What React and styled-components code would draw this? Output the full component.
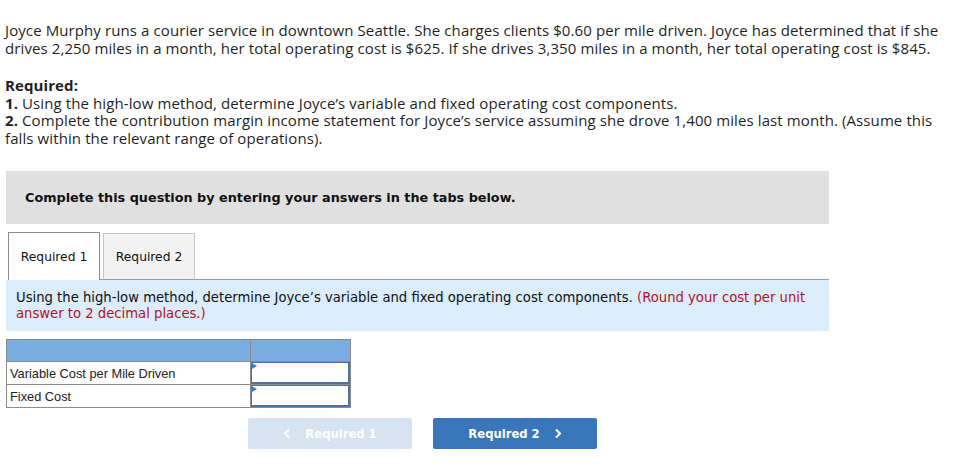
import React from "react";
import styled, { createGlobalStyle } from "styled-components";

const GlobalStyle = createGlobalStyle`
  body {
    margin: 0;
    background: #fff;
    color: #1f1f1f;
    font-family: "Open Sans", "Liberation Sans", sans-serif;
  }
`;

const Page = styled.div`
  width: 959px;
  padding: 22px 0 0 5px;
  box-sizing: border-box;
`;

const Para = styled.p`
  margin: 0 0 20px;
  width: 940px;
  font-size: 15px;
  line-height: 17.5px;
  letter-spacing: 0.1px;
`;

const Bold = styled.b`
  font-weight: 700;
`;

const Panel = styled.div`
  width: 823px;
  margin-left: 1px;
  margin-top: 24px;
`;

const Banner = styled.div`
  height: 53px;
  background: #e0e0e0;
  display: flex;
  align-items: center;
  padding-left: 19px;
  font-family: "DejaVu Sans", Verdana, sans-serif;
  font-weight: 700;
  font-size: 12.8px;
  color: #111;
`;

const TabRow = styled.div`
  display: flex;
  margin-top: 8px;
  padding-left: 2px;
  height: 48px;
  align-items: flex-end;
`;

const Tab = styled.div`
  width: 92px;
  height: ${(p) => (p.$active ? "48px" : "47px")};
  box-sizing: border-box;
  border: 1px solid ${(p) => (p.$active ? "#8a8a8a" : "#c4c4c4")};
  border-bottom: ${(p) => (p.$active ? "none" : "1px solid #9a9a9a")};
  background: ${(p) => (p.$active ? "#fff" : "#f2f2f2")};
  display: flex;
  align-items: center;
  justify-content: center;
  font-family: "DejaVu Sans", Verdana, sans-serif;
  font-size: 12.3px;
  color: #111;
`;

const TabGap = styled.div`
  width: 3px;
  align-self: stretch;
  border-bottom: 1px solid #9a9a9a;
`;

const TabFill = styled.div`
  flex: 1;
  align-self: stretch;
  border-bottom: 1px solid #9a9a9a;
`;

const Instructions = styled.div`
  background: #dbecfa;
  padding: 10px 10px 9px 10px;
  height: 51px;
  box-sizing: border-box;
  font-family: "DejaVu Sans", Verdana, sans-serif;
  font-size: 13.2px;
  line-height: 16px;
  color: #111;
`;

const Note = styled.span`
  color: #b4121e;
`;

const Table = styled.table`
  border-collapse: collapse;
  margin-top: 8px;
  font-family: "Liberation Sans", Arial, sans-serif;
  font-size: 12.8px;
  color: #222;
`;

const HeadCell = styled.td`
  background: #7aaee3;
  border: 1px solid #8c8c8c;
  height: 21px;
  padding: 0;
`;

const LabelCell = styled.td`
  width: 240px;
  height: 22px;
  border: 1px solid #8c8c8c;
  padding: 0 0 0 3px;
`;

const InputCell = styled.td`
  width: 99px;
  border: 1px solid #8c8c8c;
  padding: 0;
  position: relative;
`;

const Input = styled.div`
  height: 22px;
  box-sizing: border-box;
  border: 2px solid #4a72a4;
  border-top-width: 1px;
  border-left-width: 1px;
  background: #fff;
`;

const Marker = styled.span`
  position: absolute;
  left: 1px;
  top: 1px;
  width: 0;
  height: 0;
  border-top: 3px solid transparent;
  border-bottom: 3px solid transparent;
  border-left: 5px solid #3d7fd0;
`;

const NavRow = styled.div`
  display: flex;
  gap: 21px;
  margin-top: 10px;
  margin-left: 242px;
`;

const NavButton = styled.div`
  width: 164px;
  height: 31px;
  border-radius: 2px;
  background: ${(p) => (p.$disabled ? "#d7e3f1" : "#3a76ba")};
  color: #fff;
  display: flex;
  align-items: center;
  justify-content: center;
  gap: 14px;
  font-family: "DejaVu Sans", Verdana, sans-serif;
  font-weight: 700;
  font-size: 11.6px;
`;

const Chevron = ({ dir }) => (
  <svg width="8" height="11" viewBox="0 0 8 11">
    <path
      d={dir === "left" ? "M6 1.5 L2 5.5 L6 9.5" : "M2 1.5 L6 5.5 L2 9.5"}
      fill="none"
      stroke="#fff"
      strokeWidth="2"
    />
  </svg>
);

const rows = ["Variable Cost per Mile Driven", "Fixed Cost"];

export default function App() {
  return (
    <>
      <GlobalStyle />
      <Page>
        <Para>
          Joyce Murphy runs a courier service in downtown Seattle. She charges clients $0.60 per mile
          driven. Joyce has determined that if she drives 2,250 miles in a month, her total operating
          cost is $625. If she drives 3,350 miles in a month, her total operating cost is $845.
        </Para>
        <Para>
          <Bold>Required:</Bold>
          <br />
          <Bold>1.</Bold> Using the high-low method, determine Joyce’s variable and fixed operating cost
          components.
          <br />
          <Bold>2.</Bold> Complete the contribution margin income statement for Joyce’s service assuming
          she drove 1,400 miles last month. (Assume this falls within the relevant range of operations).
        </Para>
        <Panel>
          <Banner>Complete this question by entering your answers in the tabs below.</Banner>
          <TabRow>
            <Tab $active>Required 1</Tab>
            <TabGap />
            <Tab>Required 2</Tab>
            <TabFill />
          </TabRow>
          <Instructions>
            Using the high-low method, determine Joyce’s variable and fixed operating cost components.{" "}
            <Note>(Round your cost per unit answer to 2 decimal places.)</Note>
          </Instructions>
          <Table>
            <tbody>
              <tr>
                <HeadCell />
                <HeadCell />
              </tr>
              {rows.map((r) => (
                <tr key={r}>
                  <LabelCell>{r}</LabelCell>
                  <InputCell>
                    <Input />
                    <Marker />
                  </InputCell>
                </tr>
              ))}
            </tbody>
          </Table>
          <NavRow>
            <NavButton $disabled>
              <Chevron dir="left" />
              Required 1
            </NavButton>
            <NavButton>
              Required 2
              <Chevron dir="right" />
            </NavButton>
          </NavRow>
        </Panel>
      </Page>
    </>
  );
}
